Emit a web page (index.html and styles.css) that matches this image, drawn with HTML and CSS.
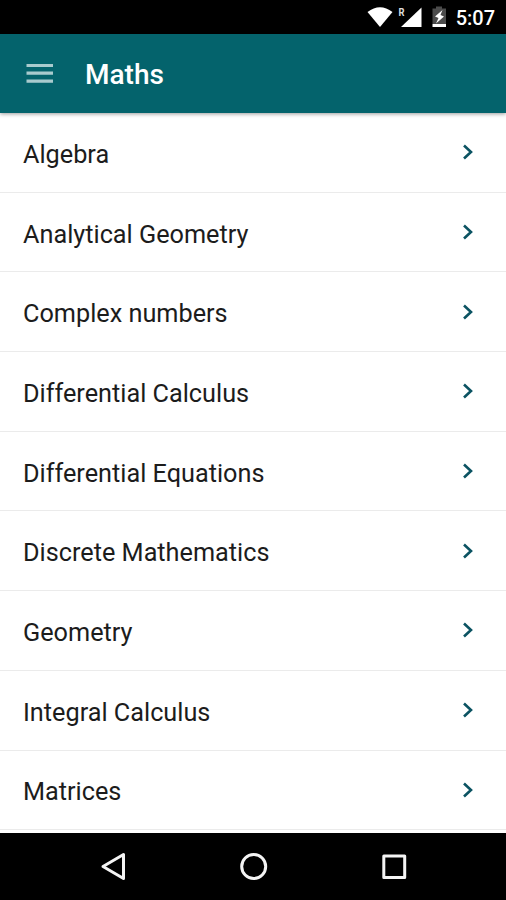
FILE: index.html
```html
<!DOCTYPE html>
<html lang="en">
<head>
<meta charset="utf-8">
<title>Maths</title>
<link rel="stylesheet" href="styles.css">
</head>
<body>
<div class="status">
<svg class="status-icons" width="82" height="34" viewBox="0 0 82 34"><path d="M0.500 12Q13 2.500 25.500 12L13 27Z" fill="#fff"/><path d="M54.500 7.500V27H34Z" fill="#fff"/><path d="M69 6.500H75V8.500H79V24H65.500V8.500H69Z" fill="#4c4c4c"/><path d="M65.500 24H79V27H65.500Z" fill="#fff"/><path d="M75.500 10L68 16.500L71.500 18L69 23.500L77 16.500L73.500 15Z" fill="#fff"/><text class="roam" x="31.500" y="16" textLength="6" lengthAdjust="spacingAndGlyphs">R</text></svg>
<span class="clock">5:07</span>
</div>
<header class="bar"><svg width="27" height="20" viewBox="0 0 27 20"><path d="M0.500 1.500H27M0.500 9.200H27M0.500 17.200H27" stroke="#a9cbce" stroke-width="3.200"/></svg><h1 class="title">Maths</h1></header>
<main class="list">
<div class="row"><span>Algebra</span><svg class="chev" viewBox="0 0 12 16"><path d="M2 1.500L9 8L2 14.500"/></svg></div>
<div class="row"><span>Analytical Geometry</span><svg class="chev" viewBox="0 0 12 16"><path d="M2 1.500L9 8L2 14.500"/></svg></div>
<div class="row"><span>Complex numbers</span><svg class="chev" viewBox="0 0 12 16"><path d="M2 1.500L9 8L2 14.500"/></svg></div>
<div class="row"><span>Differential Calculus</span><svg class="chev" viewBox="0 0 12 16"><path d="M2 1.500L9 8L2 14.500"/></svg></div>
<div class="row"><span>Differential Equations</span><svg class="chev" viewBox="0 0 12 16"><path d="M2 1.500L9 8L2 14.500"/></svg></div>
<div class="row"><span>Discrete Mathematics</span><svg class="chev" viewBox="0 0 12 16"><path d="M2 1.500L9 8L2 14.500"/></svg></div>
<div class="row"><span>Geometry</span><svg class="chev" viewBox="0 0 12 16"><path d="M2 1.500L9 8L2 14.500"/></svg></div>
<div class="row"><span>Integral Calculus</span><svg class="chev" viewBox="0 0 12 16"><path d="M2 1.500L9 8L2 14.500"/></svg></div>
<div class="row"><span>Matrices</span><svg class="chev" viewBox="0 0 12 16"><path d="M2 1.500L9 8L2 14.500"/></svg></div>
</main>
<nav class="nav"><svg width="506" height="67" viewBox="0 0 506 67"><g fill="none" stroke="#f4f4f4" stroke-width="3" stroke-linejoin="round"><path d="M123.500 21.500V45.500L103 33.500Z"/><circle cx="253.700" cy="33.500" r="12"/><path d="M383.800 23H404.700V44.500H383.800Z"/></g></svg></nav>
</body>
</html>
```

FILE: styles.css
```css
body { margin: 0; width: 506px; height: 900px; overflow: hidden; display: flex; flex-direction: column; background: #fff; font-family: Roboto, sans-serif; }
.status { height: 34px; flex: none; background: #000; display: flex; justify-content: flex-end; align-items: center; padding-right: 11px; gap: 7px; color: #fff; }
.roam { font-size: 11px; font-weight: 700; fill: #ddd; }
.clock { font-size: 20px; font-weight: 500; padding-top: 2px; }
.bar { height: 79px; flex: none; box-sizing: border-box; background: #04636c; display: flex; align-items: center; padding-left: 26px; gap: 32px; box-shadow: 0 1px 4px rgba(0,0,0,.4); z-index: 1; }
.title { margin: 0; padding-top: 2px; font-size: 28px; font-weight: 500; color: #fff; }
.list { flex: 1; min-height: 0; overflow: hidden; }
.row { height: 79.700px; box-sizing: border-box; border-bottom: 1px solid #ebebeb; display: flex; align-items: center; justify-content: space-between; padding: 0 32px 0 23px; font-size: 25.250px; color: #1c1c1c; }
.row span { padding-top: 4px; }
.chev { width: 12px; height: 16px; fill: none; stroke: #0b5362; stroke-width: 2.600; }
.nav { height: 67px; flex: none; background: #000; }
.nav svg { display: block; }
```
